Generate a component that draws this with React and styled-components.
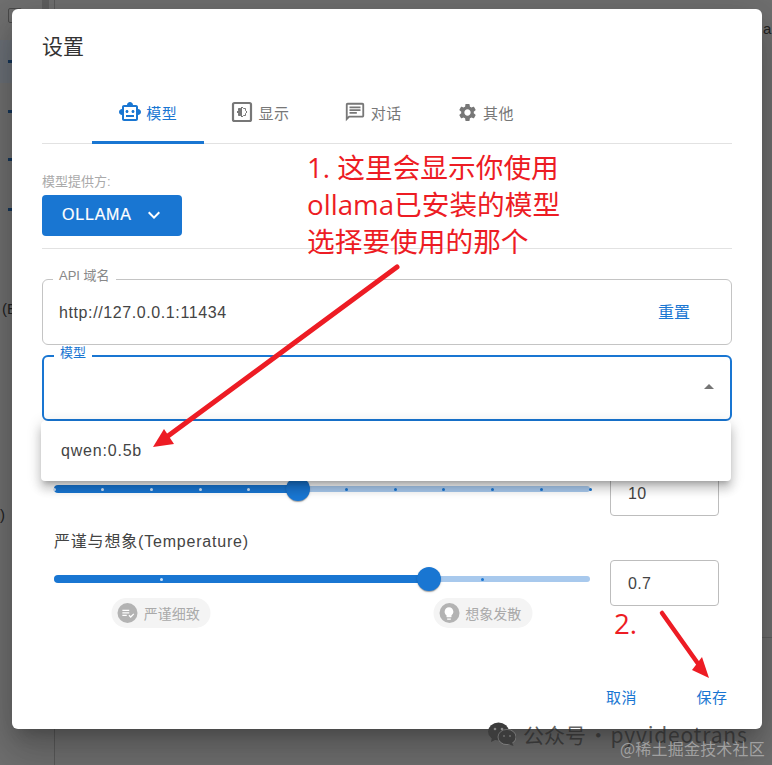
import styled, { createGlobalStyle } from 'styled-components';
import {
    MdOutlineSmartToy,
    MdOutlineChat,
    MdSettings,
    MdExpandMore,
    MdArrowDropUp,
    MdLightbulb,
    MdPlaylistAddCheck,
} from 'react-icons/md';

const GlobalStyle = createGlobalStyle`
    html, body {
        margin: 0;
        padding: 0;
        height: 100%;
        overflow: hidden;
    }
    body {
        font-family: "Liberation Sans", "Noto Sans CJK SC", sans-serif;
        color: #444;
    }
    * { box-sizing: border-box; }
`;

// the icon on the 显示 tab: square frame with a half filled sun
function DisplayIcon() {
    return (
        <svg viewBox="0 0 24 24" width="1em" height="1em">
            <rect x="3" y="3" width="18" height="18" rx="1.5" fill="none" stroke="currentColor" strokeWidth="2.2" />
            <path d="M12 7l1.5 1.5h2v2L17 12l-1.5 1.5v2h-2L12 17l-1.5-1.5h-2v-2L7 12l1.5-1.5v-2h2z" fill="none" stroke="currentColor" strokeWidth="1" />
            <path d="M12 7l-1.5 1.5h-2v2L7 12l1.5 1.5v2h2L12 17z" fill="currentColor" />
        </svg>
    );
}

const tabs = [
    { label: '模型', Icon: MdOutlineSmartToy, size: 24, active: true },
    { label: '显示', Icon: DisplayIcon, size: 24 },
    { label: '对话', Icon: MdOutlineChat, size: 22 },
    { label: '其他', Icon: MdSettings, size: 21 },
];

const range = (n) => Array.from({ length: n + 1 }, (_, i) => (i / n) * 100);

function Slider({ value, marks, chips = [] }) {
    return (
        <SliderCol>
            <SliderTrack>
                <Rail />
                <Fill style={{ width: `${value}%` }} />
                {marks.map((m) => (
                    <Mark key={m} $on={m <= value} style={{ left: `${m}%` }} />
                ))}
                <Thumb style={{ left: `${value}%` }} />
            </SliderTrack>
            {chips.map((c) => (
                <Chip key={c.label} style={{ left: `${c.at}%` }}>
                    <ChipIcon><c.Icon /></ChipIcon>
                    {c.label}
                </Chip>
            ))}
        </SliderCol>
    );
}

export default function App() {
    return (
        <Page>
            <GlobalStyle />
            <Backdrop>
                <BackLine />
                <BackStripe />
                <BackBand />
                <BackIcon />
                {[60, 110, 158, 208].map((y) => (
                    <BackTick key={y} style={{ top: y }} />
                ))}
                <BackText $x={2} $y={300}>(E</BackText>
                <BackText $x={0} $y={506}>)</BackText>
                <BackText $x={763} $y={20}>a</BackText>
                <BackRule />
            </Backdrop>

            <Modal>
                <Title>设置</Title>
                <TabBar>
                    {tabs.map(({ label, Icon, size, active }) => (
                        <Tab key={label} $active={active}>
                            <TabIcon $size={size}><Icon /></TabIcon>
                            {label}
                        </Tab>
                    ))}
                </TabBar>

                <ProviderLabel>模型提供方:</ProviderLabel>
                <ProviderButton>
                    OLLAMA
                    <MdExpandMore />
                </ProviderButton>
                <Divider />

                <Field>
                    <Legend>API 域名</Legend>
                    <FieldValue>http://127.0.0.1:11434</FieldValue>
                    <TextButton>重置</TextButton>
                </Field>
                <Field $focused>
                    <Legend $focused>模型</Legend>
                    <DropArrow><MdArrowDropUp /></DropArrow>
                    <Menu>
                        <MenuItem>qwen:0.5b</MenuItem>
                    </Menu>
                </Field>

                <FirstRow>
                    <Slider value={100 * 5 / 11} marks={range(11)} />
                    <NumberBox>10</NumberBox>
                </FirstRow>

                <SliderLabel>严谨与想象(Temperature)</SliderLabel>
                <SliderRow>
                    <Slider
                        value={70}
                        marks={[20, 80]}
                        chips={[
                            { label: '严谨细致', at: 20, Icon: MdPlaylistAddCheck },
                            { label: '想象发散', at: 80, Icon: MdLightbulb },
                        ]}
                    />
                    <NumberBox>0.7</NumberBox>
                </SliderRow>

                <Footer>
                    <FooterButton>取消</FooterButton>
                    <FooterButton>保存</FooterButton>
                </Footer>
            </Modal>

            <Note $x={307} $y={149}>
                1. 这里会显示你使用<br />
                ollama已安装的模型<br />
                选择要使用的那个
            </Note>
            <Note $x={614} $y={605}>2.</Note>
            <Arrows viewBox="0 0 772 765">
                <path d="M397 267 L168 436" stroke="#ed1c24" strokeWidth="5" strokeLinecap="round" fill="none" />
                <path d="M153 447 L164 429 L174 444 Z" fill="#ed1c24" />
                <path d="M662 613 L699 665" stroke="#ed1c24" strokeWidth="4.5" strokeLinecap="round" fill="none" />
                <path d="M709 678 L692 670 L702 657 Z" fill="#ed1c24" />
            </Arrows>

            <Watermark>
                <WeChat viewBox="0 0 28 24">
                    <ellipse cx="10.5" cy="9.5" rx="10.5" ry="9" fill="#3c3c3c" />
                    <path d="M4 15 L3 20 L9 17 Z" fill="#3c3c3c" />
                    <ellipse cx="19" cy="15" rx="9" ry="7.6" fill="#3c3c3c" stroke="#fff" strokeOpacity=".25" />
                    <path d="M24 20 L25.5 24 L20 22 Z" fill="#3c3c3c" />
                    <circle cx="7" cy="7" r="1.3" fill="#8a8a8a" />
                    <circle cx="14" cy="7" r="1.3" fill="#8a8a8a" />
                    <circle cx="16" cy="14" r="1.1" fill="#6a6a6a" />
                    <circle cx="22" cy="14" r="1.1" fill="#6a6a6a" />
                </WeChat>
                <span>公众号 · <WatermarkName>pyvideotrans</WatermarkName></span>
            </Watermark>
            <Juejin>@稀土掘金技术社区</Juejin>
        </Page>
    );
}

const Page = styled.div`
    position: relative;
    width: 772px;
    height: 765px;
    padding: 9px 10px 0 12px;
    background: #707070;
    overflow: hidden;
`;

const Backdrop = styled.div`
    position: absolute;
    inset: 0;
`;

const BackLine = styled.div`
    position: absolute;
    left: 54px;
    top: 0;
    bottom: 0;
    width: 1px;
    background: #5a5a5a;
`;

const BackStripe = styled.div`
    position: absolute;
    left: 42px;
    top: 0;
    width: 7px;
    height: 9px;
    background: #5f5f5f;
`;

const BackBand = styled.div`
    position: absolute;
    left: 0;
    top: 40px;
    width: 12px;
    height: 43px;
    background: #6b7077;
`;

const BackIcon = styled.div`
    position: absolute;
    left: 8px;
    top: 8px;
    width: 14px;
    height: 15px;
    border: 1px solid #4a4a4a;
    border-radius: 2px;
`;

const BackTick = styled.div`
    position: absolute;
    left: 8px;
    width: 4px;
    height: 3px;
    background: #15365a;
`;

const BackText = styled.div`
    position: absolute;
    left: ${(p) => p.$x}px;
    top: ${(p) => p.$y}px;
    font-size: 15px;
    color: #222;
`;

const BackRule = styled.div`
    position: absolute;
    left: 762px;
    right: 0;
    top: 637px;
    height: 1px;
    background: #606060;
`;

const Modal = styled.div`
    position: relative;
    display: flex;
    flex-direction: column;
    width: 750px;
    height: 720px;
    padding: 22px 30px 15px;
    background: #fff;
    border-radius: 6px;
    box-shadow: 0 11px 15px -7px rgba(0,0,0,.2), 0 24px 38px 3px rgba(0,0,0,.14), 0 9px 46px 8px rgba(0,0,0,.12);
`;

const Title = styled.div`
    font-size: 21px;
    line-height: 31px;
    color: #333;
`;

const TabBar = styled.div`
    display: flex;
    margin-top: 20px;
    padding-left: 50px;
    height: 62px;
    border-bottom: 1px solid #e2e2e2;
`;

const Tab = styled.div`
    display: flex;
    align-items: center;
    justify-content: center;
    gap: 4px;
    width: 112.3px;
    height: 62px;
    padding-top: 1px;
    font-size: 15px;
    letter-spacing: .5px;
    color: ${(p) => (p.$active ? '#1976d2' : '#777')};
    border-bottom: 3px solid ${(p) => (p.$active ? '#1976d2' : 'transparent')};
`;

const TabIcon = styled.span`
    display: flex;
    align-items: center;
    justify-content: center;
    width: 24px;
    margin-left: -1px;
    font-size: ${(p) => p.$size}px;
`;

const ProviderLabel = styled.div`
    margin-top: 30px;
    font-size: 13px;
    line-height: 16px;
    color: #aaa;
`;

const ProviderButton = styled.div`
    display: flex;
    align-items: center;
    gap: 10px;
    width: 140px;
    height: 41px;
    margin-top: 5px;
    padding: 0 0 2px 20px;
    border-radius: 4px;
    background: #1976d2;
    color: #fff;
    font-size: 16px;
    letter-spacing: .8px;
    -webkit-text-stroke: .2px #fff;
    svg { font-size: 24px; }
`;

const Divider = styled.div`
    height: 1px;
    margin: 12px 0 30px;
    background: #e2e2e2;
`;

const Field = styled.div`
    position: relative;
    display: flex;
    align-items: center;
    justify-content: space-between;
    height: 66px;
    margin-bottom: 10px;
    padding: 0 41px 0 16px;
    border-radius: 6px;
    border: ${(p) => (p.$focused ? '2px solid #1976d2' : '1px solid #c4c4c4')};
`;

const Legend = styled.span`
    position: absolute;
    left: 10px;
    top: -12px;
    padding: 0 6px;
    background: #fff;
    font-size: 13px;
    line-height: 16px;
    color: ${(p) => (p.$focused ? '#1976d2' : '#888')};
`;

const FieldValue = styled.span`
    margin-top: 1px;
    font-size: 16px;
    letter-spacing: .6px;
    color: #444;
`;

const TextButton = styled.span`
    margin-top: -3px;
    font-size: 16px;
    color: #1976d2;
`;

const DropArrow = styled.span`
    position: absolute;
    right: 9px;
    top: 18px;
    display: flex;
    color: #757575;
    svg { font-size: 24px; }
`;

const Menu = styled.div`
    position: absolute;
    top: 64px;
    left: -3px;
    right: -1px;
    height: 60px;
    display: flex;
    align-items: center;
    padding: 0 20px;
    border-radius: 4px;
    background: #fff;
    box-shadow: 0 5px 5px -3px rgba(0,0,0,.2), 0 8px 10px 1px rgba(0,0,0,.14), 0 3px 14px 2px rgba(0,0,0,.12);
    z-index: 2;
`;

const MenuItem = styled.span`
    font-size: 16px;
    letter-spacing: .8px;
    color: #444;
`;

const SliderRow = styled.div`
    display: grid;
    grid-template-columns: 536px 109px;
    column-gap: 20px;
    padding-left: 12px;
`;

const FirstRow = styled(SliderRow)`
    margin-top: 39px;
`;

const SliderCol = styled.div`
    position: relative;
`;

const SliderTrack = styled.div`
    position: relative;
    height: 38px;
`;

const Rail = styled.div`
    position: absolute;
    left: 0;
    right: 0;
    top: 16px;
    height: 6px;
    border-radius: 3px;
    background: #a8c9ed;
`;

const Fill = styled.div`
    position: absolute;
    left: 0;
    top: 15px;
    height: 8px;
    border-radius: 4px;
    background: #1976d2;
`;

const Mark = styled.div`
    position: absolute;
    top: 17.5px;
    width: 3px;
    height: 3px;
    margin-left: -1.5px;
    border-radius: 50%;
    background: ${(p) => (p.$on ? '#cfe2f6' : '#1976d2')};
`;

const Thumb = styled.div`
    position: absolute;
    top: 7px;
    width: 24px;
    height: 24px;
    margin-left: -12px;
    border-radius: 50%;
    background: #1976d2;
    box-shadow: 0 2px 1px -1px rgba(0,0,0,.2), 0 1px 1px 0 rgba(0,0,0,.14), 0 1px 3px 0 rgba(0,0,0,.12);
`;

const Chip = styled.div`
    position: absolute;
    top: 38px;
    display: flex;
    align-items: center;
    gap: 6px;
    height: 30px;
    padding: 0 11px 0 6px;
    border-radius: 15px;
    transform: translateX(-50%);
    background: #f4f4f4;
    font-size: 14px;
    white-space: nowrap;
    color: #aaa;
`;

const ChipIcon = styled.span`
    display: flex;
    align-items: center;
    justify-content: center;
    width: 20px;
    height: 20px;
    border-radius: 50%;
    background: #b3b3b3;
    color: #fff;
    svg { font-size: 15px; }
`;

const NumberBox = styled.div`
    display: flex;
    align-items: center;
    height: 46px;
    padding: 2px 17px 0;
    border: 1px solid #bdbdbd;
    border-radius: 4px;
    font-size: 16px;
    letter-spacing: .3px;
    color: #444;
`;

const SliderLabel = styled.div`
    margin-top: 15px;
    margin-bottom: 7px;
    padding-left: 12px;
    font-size: 16px;
    letter-spacing: .8px;
    line-height: 22px;
    color: #444;
`;

const Footer = styled.div`
    display: flex;
    justify-content: flex-end;
    gap: 26.5px;
    margin-top: auto;
    margin-right: -12px;
`;

const FooterButton = styled.span`
    display: flex;
    align-items: center;
    justify-content: center;
    width: 64px;
    height: 36px;
    font-size: 15px;
    letter-spacing: .5px;
    color: #1976d2;
`;

const Note = styled.div`
    position: absolute;
    left: ${(p) => p.$x}px;
    top: ${(p) => p.$y}px;
    z-index: 3;
    font-family: "Open Sans", "Noto Sans CJK SC", sans-serif;
    font-size: 27.7px;
    line-height: 37px;
    color: #ed1c24;
    white-space: nowrap;
`;

const Arrows = styled.svg`
    position: absolute;
    inset: 0;
    z-index: 3;
    width: 772px;
    height: 765px;
    pointer-events: none;
`;

const Watermark = styled.div`
    position: absolute;
    left: 488px;
    top: 721px;
    z-index: 3;
    display: flex;
    align-items: center;
    gap: 7px;
    font-family: "Noto Sans CJK SC", sans-serif;
    font-size: 21px;
    line-height: 26px;
    word-spacing: -3px;
    white-space: nowrap;
    color: rgba(40, 40, 40, .72);
`;

const WatermarkName = styled.span`
    letter-spacing: .8px;
`;

const WeChat = styled.svg`
    width: 28px;
    height: 24px;
`;

const Juejin = styled.div`
    position: absolute;
    left: 620px;
    top: 738px;
    z-index: 3;
    font-family: "Noto Sans CJK SC", sans-serif;
    font-size: 16px;
    letter-spacing: .2px;
    line-height: 20px;
    white-space: nowrap;
    color: rgba(190, 190, 190, .7);
`;
